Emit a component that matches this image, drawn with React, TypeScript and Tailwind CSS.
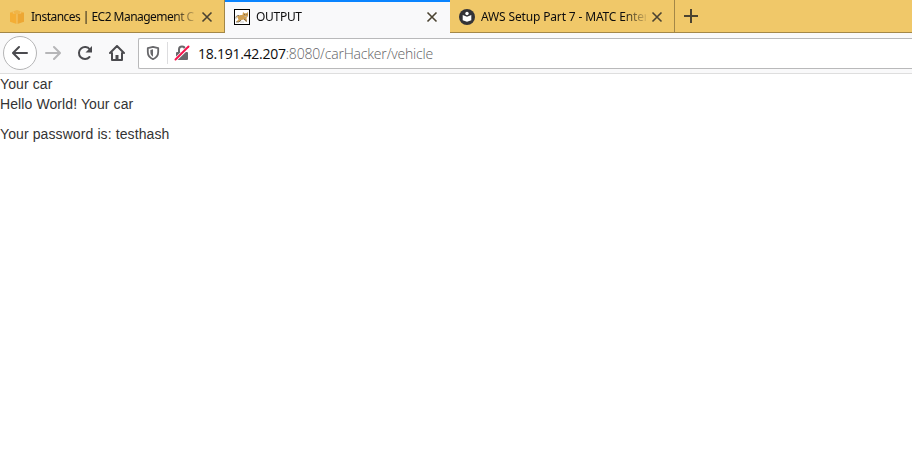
import type { ReactNode } from "react";

function CloseIcon() {
  return (
    <svg className="size-3 shrink-0" viewBox="0 0 12 12" fill="none" stroke="#4b4331" strokeWidth="1.6">
      <path d="M1.500 1.500l9 9M10.500 1.500l-9 9" />
    </svg>
  );
}

function CubeIcon() {
  return (
    <svg className="size-4 shrink-0" viewBox="0 0 16 16">
      <path d="M1 3.500L8 1l7 2.500L8 5.500z" fill="#f0b548" />
      <path d="M1 3.500l6.700 1.700V15L1 12.700z" fill="#f4ae35" />
      <path d="M15 3.500L8.300 5.200V15l6.700-2.300z" fill="#eda733" />
      <path d="M8 5v10M4 2.300l1 2.500M12 2.300l-1 2.500" stroke="#f3c571" strokeWidth=".7" />
    </svg>
  );
}

function CatIcon() {
  return (
    <svg className="size-4 shrink-0" viewBox="0 0 16 16">
      <rect x=".5" y=".5" width="15" height="15" fill="#fff" stroke="#000" />
      <path d="M3 7.500C4.500 6 6.500 6 8.500 6L9 3l1.500 1.200h2L14 3v4l-1.500 2 .5 3.500h-1.500L10 10.500l-2.500.5L6 12.800 2 13l2.500-2.500z" fill="#d0a052" />
      <path d="M2 9.500c-.5-2 1-3.500 3-3M2 13h3l2-2M10 10l3 2.500M10 5.500h1M12.500 5.500h.8" fill="none" stroke="#6c604c" strokeWidth=".8" />
      <path d="M6 13h4M10.500 7.500h2" stroke="#bbb" strokeWidth=".8" />
    </svg>
  );
}

function ReaderIcon() {
  return (
    <svg className="size-4 shrink-0" viewBox="0 0 16 16">
      <circle cx="8" cy="8" r="8" fill="#333337" />
      <circle cx="8" cy="4.500" r="1.700" fill="#fff" />
      <path d="M3.700 6L8 7.800 12.300 6v5.200L8 12.800l-4.300-1.600z" fill="#fff" />
    </svg>
  );
}

type TabProps = { icon: ReactNode; title: string; active?: boolean; spacing: string };

function Tab({ icon, title, active, spacing }: TabProps) {
  return (
    <div
      className={
        active
          ? "flex h-[33px] w-[225px] shrink-0 items-center border-t-2 border-[#0a84ff] bg-[#f9f9fa] pr-3 pb-px pl-[9px]"
          : "flex h-[33px] w-[225px] shrink-0 items-center border-r border-b border-[#a38747] bg-[#f0c869] pt-0.5 pr-[11px] pl-[9px]"
      }
    >
      {icon}
      <div
        className={`ml-1.5 w-[165px] shrink-0 overflow-hidden whitespace-nowrap text-[12px] leading-5 text-[#0c0c0d] [mask-image:linear-gradient(to_right,black_142px,transparent_168px)] ${spacing}`}
      >
        {title}
      </div>
      <div className="ml-auto flex">
        <CloseIcon />
      </div>
    </div>
  );
}

function BackIcon() {
  return (
    <svg className="size-4" viewBox="0 0 16 16" fill="none" stroke="#4b4b4f" strokeWidth="2" strokeLinecap="round" strokeLinejoin="round">
      <path d="M15 8H1.500M7 2L1 8l6 6" />
    </svg>
  );
}

function ForwardIcon() {
  return (
    <svg className="size-4" viewBox="0 0 16 16" fill="none" stroke="#b6b6b8" strokeWidth="2" strokeLinecap="round" strokeLinejoin="round">
      <path d="M1 8h13.500M9 2l6 6-6 6" />
    </svg>
  );
}

function ReloadIcon() {
  return (
    <svg className="size-4" viewBox="0 0 16 16" fill="none" stroke="#4b4b4f" strokeWidth="2">
      <path d="M12.500 12A6 6 0 1 1 12.800 4.500" strokeLinecap="round" />
      <path d="M15 1v6.500H8.500z" fill="#4b4b4f" stroke="none" />
    </svg>
  );
}

function HomeIcon() {
  return (
    <svg className="size-4" viewBox="0 0 16 16" fill="none" stroke="#4b4b4f" strokeWidth="2" strokeLinecap="round" strokeLinejoin="round">
      <path d="M1 8l7-7 7 7M3 8v7h10V8" />
      <path d="M6.500 14v-4h3v4z" fill="#4b4b4f" stroke="none" />
    </svg>
  );
}

function ShieldIcon() {
  return (
    <svg className="size-4" viewBox="0 0 16 16">
      <path d="M8 1.800l5.200 1.300v3.900c0 3.200-1.800 5.700-5.200 7.200-3.400-1.500-5.200-4-5.200-7.200V3.100z" fill="none" stroke="#68686b" strokeWidth="1.800" strokeLinejoin="round" />
      <path d="M8 4.300v7.500c-1.900-1.200-2.600-2.800-2.600-4.800V5z" fill="#68686b" />
    </svg>
  );
}

function InsecureIcon() {
  return (
    <svg className="size-4" viewBox="0 0 16 16" fill="none">
      <path d="M5 8V4.500a3 3 0 0 1 6 0V8" stroke="#68686b" strokeWidth="2" />
      <rect x="2" y="7" width="12" height="8" rx="1" fill="#68686b" />
      <path d="M1 15L15 1.500" stroke="#fff" strokeWidth="3.600" />
      <path d="M1.500 14.500L14.500 1.500" stroke="#f5144c" strokeWidth="2" strokeLinecap="round" />
    </svg>
  );
}

export default function App() {
  return (
    <div className="h-[459px] w-full overflow-hidden bg-white">
      <div className="flex h-[33px] bg-[#f0c869] font-['Noto_Sans','Open_Sans',sans-serif]">
        <Tab icon={<CubeIcon />} title="Instances | EC2 Management C" spacing="tracking-[-0.53px]" />
        <Tab icon={<CatIcon />} title="OUTPUT" active spacing="tracking-[-0.3px]" />
        <Tab icon={<ReaderIcon />} title="AWS Setup Part 7 - MATC Enter" spacing="tracking-[-0.15px]" />
        <div className="flex flex-1 items-center border-b border-[#a38747] pl-[9px]">
          <svg className="size-3.5" viewBox="0 0 14 14" stroke="#4b4331" strokeWidth="2">
            <path d="M7 0v14M0 7h14" />
          </svg>
        </div>
      </div>

      <div className="flex h-[41px] items-center border-b border-[#dedede] bg-[#f9f9fa] pl-[3px]">
        <div className="flex size-[34px] shrink-0 items-center justify-center rounded-full border border-[#b5b5b6] bg-white">
          <BackIcon />
        </div>
        <div className="ml-2 flex gap-4">
          <ForwardIcon />
          <ReloadIcon />
          <HomeIcon />
        </div>
        <div className="ml-[13px] flex h-[31px] flex-1 items-center rounded-l-xs border border-r-0 border-[#b9b9ba] bg-white pl-1.5">
          <ShieldIcon />
          <div className="ml-1.5 h-[22px] w-px bg-[#dddddf]" />
          <div className="ml-1.5">
            <InsecureIcon />
          </div>
          <div className="ml-2 pt-0.5 whitespace-nowrap font-['Open_Sans','Noto_Sans',sans-serif] text-[14px] leading-5 font-light tracking-[-0.18px] text-[#626265]">
            <span className="font-normal tracking-[-0.26px] text-[#0c0c0d]">18.191.42.207</span>:8080/carHacker/vehicle
          </div>
        </div>
      </div>

      <main className="font-['Liberation_Sans',Arial,sans-serif] text-[14px] leading-5 tracking-[0.1px] text-[#333]">
        <div>Your car</div>
        <div>Hello World! Your car</div>
        <p className="mt-2.5">Your password is: testhash</p>
      </main>
    </div>
  );
}
